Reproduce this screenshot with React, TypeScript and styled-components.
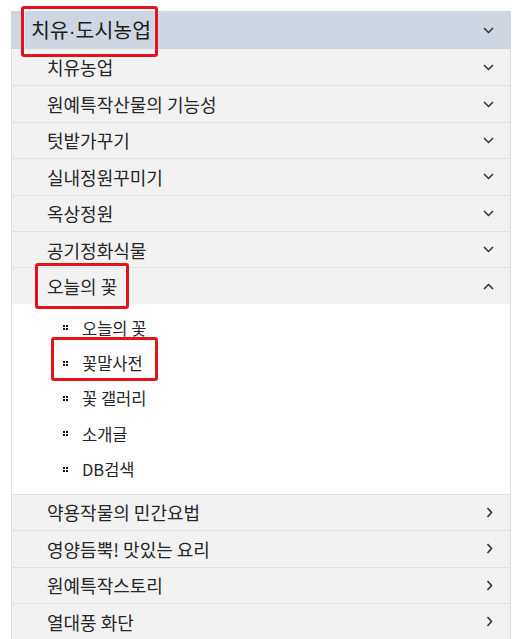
import React from "react";
import styled, { createGlobalStyle, css } from "styled-components";

const Global = createGlobalStyle`
  html, body { margin: 0; padding: 0; background: #fff; }
  body { font-family: "Noto Sans CJK KR", "Noto Sans", sans-serif; color: #222; }
`;

const Page = styled.div`
  padding: 11px 0 0 11px;
`;

const Panel = styled.nav`
  width: 500px;
  display: flex;
  flex-direction: column;
`;

const Header = styled.div`
  height: 38px;
  background: #cdd6e1;
  display: flex;
  align-items: center;
  justify-content: space-between;
  padding: 0 17px 0 20px;
  box-sizing: border-box;
  font-size: 20.5px;
  color: #1e1e1e;
`;

const Dot = styled.span`
  font-family: "Liberation Sans", Arial, sans-serif;
`;

const List = styled.ul`
  list-style: none;
  margin: 0;
  padding: 0;
  border-left: 1px solid #dedede;
  border-right: 1px solid #dedede;
`;

const Row = styled.li<{ $first?: boolean }>`
  height: 36.4px;
  box-sizing: border-box;
  background: #f2f2f2;
  display: flex;
  align-items: center;
  justify-content: space-between;
  padding: 0 16px 0 35px;
  font-size: 18px;
  color: #262626;
  ${(p) => (p.$first ? "" : css`border-top: 1px solid #e1e1e1;`)}
`;

const SubList = styled.ul`
  list-style: none;
  margin: 0;
  padding: 6.5px 0 7px 51px;
  background: #fff;
`;

const SubItem = styled.li`
  height: 35.3px;
  display: flex;
  align-items: center;
  gap: 14px;
  font-size: 16.5px;
  color: #262626;
`;

const Bullet = styled.span`
  width: 5px;
  height: 5px;
  display: grid;
  grid-template-columns: 2px 2px;
  grid-template-rows: 2px 2px;
  gap: 1px;
  span { background: #111; }
`;

const Mark = styled.span<{ $t: number; $r: number; $b: number; $l: number }>`
  position: relative;
  display: inline-block;
  line-height: 1;
  &::after {
    content: "";
    position: absolute;
    top: ${(p) => -p.$t}px;
    right: ${(p) => -p.$r}px;
    bottom: ${(p) => -p.$b}px;
    left: ${(p) => -p.$l}px;
    border: 3px solid #e4121b;
    border-radius: 3px;
    box-shadow: inset 0 0 0 1px rgba(255, 255, 255, 0.5);
    pointer-events: none;
  }
`;

const Icon = styled.svg`
  flex: none;
  display: block;
`;

const Down = () => (
  <Icon width="11" height="7" viewBox="0 0 11 7">
    <polyline points="1,1 5.5,5.5 10,1" fill="none" stroke="#333" strokeWidth="1.5" />
  </Icon>
);
const Up = () => (
  <Icon width="11" height="7" viewBox="0 0 11 7">
    <polyline points="1,6 5.5,1.5 10,6" fill="none" stroke="#333" strokeWidth="1.5" />
  </Icon>
);
const Right = () => (
  <Icon width="7" height="11" viewBox="0 0 7 11" style={{ marginRight: 1 }}>
    <polyline points="1.5,1 5.5,5.5 1.5,10" fill="none" stroke="#333" strokeWidth="1.6" />
  </Icon>
);

const BulletIcon = () => (
  <Bullet>
    <span />
    <span />
    <span />
    <span />
  </Bullet>
);

const topRows = ["치유농업", "원예특작산물의 기능성", "텃밭가꾸기", "실내정원꾸미기", "옥상정원", "공기정화식물"];
const subs = ["오늘의 꽃", "꽃말사전", "꽃 갤러리", "소개글", "DB검색"];
const bottomRows = ["약용작물의 민간요법", "영양듬뿍! 맛있는 요리", "원예특작스토리", "열대풍 화단"];

export default function App() {
  return (
    <Page>
      <Global />
      <Panel>
        <Header>
          <Mark $t={13} $r={7} $b={16} $l={10}>
            치유<Dot>·</Dot>도시농업
          </Mark>
          <Down />
        </Header>
        <List>
          {topRows.map((t, i) => (
            <Row key={t} $first={i === 0}>
              <span>{t}</span>
              <Down />
            </Row>
          ))}
          <Row>
            <Mark $t={14} $r={12} $b={14} $l={12}>오늘의 꽃</Mark>
            <Up />
          </Row>
          <SubList>
            {subs.map((s) => (
              <SubItem key={s}>
                <BulletIcon />
                {s === "꽃말사전" ? (
                  <Mark $t={18} $r={15} $b={10} $l={31}>{s}</Mark>
                ) : (
                  <span>{s}</span>
                )}
              </SubItem>
            ))}
          </SubList>
          {bottomRows.map((t) => (
            <Row key={t}>
              <span>{t}</span>
              <Right />
            </Row>
          ))}
        </List>
      </Panel>
    </Page>
  );
}
